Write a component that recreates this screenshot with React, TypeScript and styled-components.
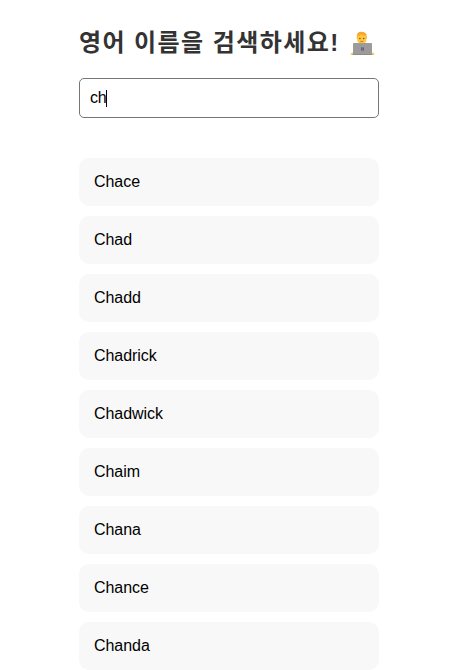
import React from 'react';
import styled, { createGlobalStyle } from 'styled-components';

const GlobalStyle = createGlobalStyle`
  * { box-sizing: border-box; }
  body {
    margin: 0;
    background: #fff;
    color: #000;
    font-family: "Liberation Sans", Arial, sans-serif;
    overflow: hidden;
  }
`;

const Page = styled.main`
  width: 300px;
  margin: 0 0 0 79px;
  padding-top: 27px;
`;

const Header = styled.header`
  display: flex;
  align-items: center;
  height: 32px;
  margin-bottom: 19px;
`;

const Title = styled.h1`
  margin: 0;
  font: 700 24px/32px "Liberation Sans", "Noto Sans CJK KR", sans-serif;
  letter-spacing: 1.42px;
  color: #333;
  white-space: nowrap;
`;

const Technologist = styled.svg`
  flex: none;
  width: 25px;
  height: 25px;
  margin: 1px 4px 0 auto;
`;

const SearchField = styled.div`
  display: flex;
  align-items: center;
  height: 40px;
  padding: 0 10px;
  border: 1px solid #767676;
  border-radius: 5px;
  font-size: 16px;
  letter-spacing: -0.3px;
`;

const Caret = styled.span`
  width: 1px;
  height: 17px;
  background: #000;
`;

const NameList = styled.ul`
  display: flex;
  flex-direction: column;
  gap: 10px;
  margin: 40px 0 0;
  padding: 0;
  list-style: none;
`;

const NameItem = styled.li`
  height: 48px;
  padding: 0 15px;
  border-radius: 10px;
  background: #f8f8f8;
  font-size: 16px;
  line-height: 48px;
  letter-spacing: -0.05px;
`;

const names = ['Chace', 'Chad', 'Chadd', 'Chadrick', 'Chadwick', 'Chaim', 'Chana', 'Chance', 'Chanda'];

export default function App() {
  return (
    <>
      <GlobalStyle />
      <Page>
        <Header>
          <Title>영어 이름을 검색하세요!</Title>
          <Technologist viewBox="0 0 25 25" aria-hidden="true">
            <path d="M.5 23.800q0-2.300 2.500-2.300h19q2.500 0 2.500 2.300z" fill="#ffc83d" />
            <path d="M6.800 8V5Q6.800.7 11.500.7q2 0 3 .7 2.300.8 2.300 3.800V8z" fill="#f9a52f" />
            <path d="M7.300 5.200q2.400-.3 3.700-1.900 2 1.300 5.300 1.500v4.700q0 2.900-4.500 2.900t-4.500-2.900z" fill="#ffc83d" />
            <circle cx="9.900" cy="7.500" r=".75" fill="#6b4630" />
            <circle cx="13.700" cy="7.500" r=".75" fill="#6b4630" />
            <path d="M10.400 10.200q1.400.8 2.800 0" fill="none" stroke="#b16c27" strokeWidth=".9" />
            <rect x="3" y="12" width="19" height="12" rx="1" fill="#9b9b9b" />
            <path d="M2.700 23h19.600v1H2.700z" fill="#8b8b8b" />
            <path d="M11 16.500h1.300v1.300H11zm1.700 0H14v1.300h-1.300zM11 18.200h1.300v1.300H11zm1.700 0H14v1.300h-1.300z" fill="#604575" />
          </Technologist>
        </Header>
        <SearchField role="textbox" aria-label="영어 이름">
          ch<Caret />
        </SearchField>
        <NameList>
          {names.map((name) => (
            <NameItem key={name}>{name}</NameItem>
          ))}
        </NameList>
      </Page>
    </>
  );
}
